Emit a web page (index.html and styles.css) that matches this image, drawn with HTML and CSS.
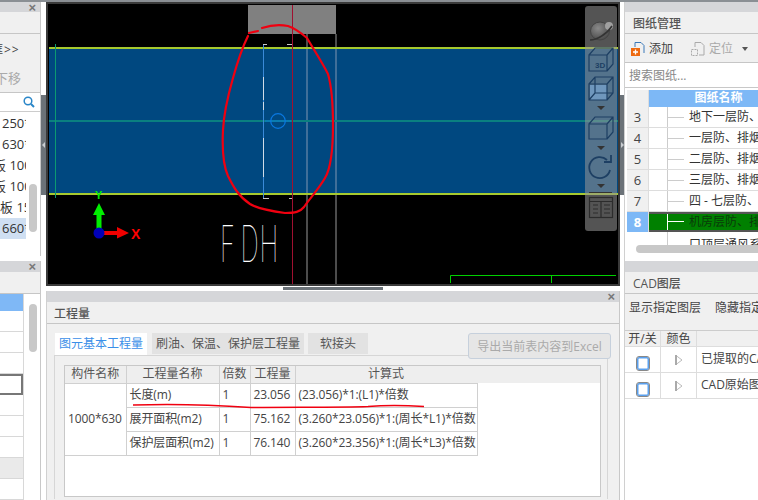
FILE: index.html
```html
<!DOCTYPE html>
<html lang="zh">
<head>
<meta charset="utf-8">
<title>工程量</title>
<link rel="stylesheet" href="styles.css">
</head>
<body>
<div class="app">
  <aside class="side side-left">
    <section class="panel panel-lt">
      <div class="strip"><span class="close">×</span></div>
      <div class="title-row"></div>
      <div class="tool-row tool-a"><span class="clip">框&gt;&gt;</span></div>
      <div class="tool-row tool-b"><span class="clip muted">下移</span></div>
      <div class="search-mini">
        <svg class="mag" width="12" height="12" viewBox="0 0 12 12"><circle cx="5" cy="5" r="3.8" fill="none" stroke="#2a86c8" stroke-width="1.5"/><path d="M8 8l3 3" stroke="#2a86c8" stroke-width="2"/></svg>
      </div>
      <div class="list-wrap">
        <ul class="list">
          <li>250*</li>
          <li>630*</li>
          <li class="cut-a">板 100</li>
          <li class="cut-a">板 100</li>
          <li class="cut-b">板 15</li>
          <li class="sel">660*</li>
        </ul>
        <div class="vbar"></div>
      </div>
    </section>
    <section class="panel panel-lb">
      <div class="strip"><span class="close">×</span></div>
      <div class="title-row"></div>
      <div class="list-wrap">
        <div class="rows">
          <div class="r r-blue"></div>
          <div class="r"></div>
          <div class="r"></div>
          <div class="r"></div>
          <div class="r r-focus"></div>
          <div class="r"></div>
          <div class="r"></div>
          <div class="r"></div>
          <div class="r r-grey"></div>
          <div class="r"></div>
        </div>
        <div class="vbar vbar-2"></div>
      </div>
    </section>
  </aside>

  <div class="split-v"><div class="grip"><span class="arrow-l"></span></div></div>

  <main class="center">
    <div class="canvas">
      <svg class="drawing" width="574" height="284" viewBox="46 2 574 284">
        <rect x="46" y="2" width="574" height="284" fill="#000"/>
        <rect x="47" y="3" width="572" height="282" fill="none" stroke="#3a3a3a" stroke-width="2"/>
        <rect x="248" y="5" width="88" height="29" fill="#808080"/>
        <rect x="49" y="48" width="569" height="146" fill="#004880"/>
        <path d="M307 34V284M336 34V284" stroke="#666" stroke-width="1.500" fill="none"/>
        <path d="M307 48V193M336 48V193" stroke="#3d76a8" stroke-width="1.500" fill="none"/>
        <rect x="49" y="47" width="569" height="2" fill="#a6c92e"/>
        <rect x="49" y="193" width="569" height="2" fill="#a6c92e"/>
        <rect x="49" y="120" width="569" height="2" fill="#0a8080"/>
        <path d="M55.500 44V198" stroke="#0c9a70" fill="none"/>
        <path d="M263.500 44V198" stroke="#3a8ad8" fill="none"/>
        <path d="M263.500 77V100M263.500 102V110M263.500 138V177" stroke="#d0dce8" fill="none"/>
        <path d="M263 44.500h4M287 44.500h5M263 198.500h6M289 198.500h3" stroke="#c8c8c8" fill="none"/>
        <circle cx="278" cy="121" r="7.300" fill="none" stroke="#0a78e0" stroke-width="1.200"/>
        <path d="M265 121H291" stroke="#0a78e0" fill="none"/>
        <path d="M292.500 5V284" stroke="#a01030" fill="none"/>
        <path d="M450.500 283V275.500H616M551.500 275.500V283" stroke="#00d000" fill="none"/>
        <text class="cad-text" transform="translate(220 262) scale(.5 1)"><tspan>F</tspan><tspan dx="11">D</tspan><tspan dx="2">H</tspan></text>
        <path d="M96.500 232V215H93L99 203L105 215H101.500V232Z" fill="#00ee00"/>
        <path d="M104 231H117V227L129 233L117 238.500V235H104Z" fill="#f00000"/>
        <circle cx="99" cy="233" r="5.500" fill="#0000b8"/>
        <text class="axis axis-x" x="131" y="239">X</text>
        <text class="axis axis-y" x="95" y="199">Y</text>
        <path d="M248 36C243 46 238 60 233 78C229 92 224 110 223 130C222 150 223 165 228 176C233 186 238 196 250 204C258 209 270 211 285 213C295 213 300 212 304 207C310 198 318 190 325 178C331 168 333 150 333 125C333 105 332 88 328 74C322 62 314 50 307 38C300 32 294 28 288 26C278 24 268 26 262 28M258 31L249 33" fill="none" stroke="#f00010" stroke-width="2.200" stroke-linecap="round"/>
      </svg>
      <div class="view-tools">
        <svg width="32" height="225" viewBox="0 0 32 225">
          <defs>
            <radialGradient id="ball" cx=".4" cy=".35" r=".8"><stop offset="0" stop-color="#8a8a8a"/><stop offset="1" stop-color="#3f3f3f"/></radialGradient>
          </defs>
          <ellipse cx="15" cy="25" rx="9.500" ry="9" fill="url(#ball)" stroke="#444"/>
          <circle cx="24" cy="20" r="4" fill="#a0a0a0"/>
          <path d="M5 34C12 34 22 28 27 20" fill="none" stroke="#333" stroke-width="1.500"/>
          <rect x="5" y="79" width="17" height="15" fill="#7ba7d2" opacity=".7"/>
          <g fill="none" stroke="#1d3f63" stroke-width="1.200">
            <path d="M4 49h18v16H4zM4 49l6-7h18v16l-6 7M22 49l6-7"/>
            <path d="M4 78h18v16H4zM4 78l6-7h18v16l-6 7M22 78l6-7M10 71v16h18M10 87l-6 7"/>
            <path d="M4 118h18v15H4zM4 118l6-7h18v15l-6 7M22 118l6-7"/>
            <path d="M25 164A10.500 10.500 0 1 1 22 154M26 149v7h-7" stroke-width="1.800"/>
          </g>
          <text class="tool-3d" x="10" y="62">3D</text>
          <path d="M12 100h8l-4 4zM12 140h8l-4 4zM12 178h8l-4 4z" fill="#333"/>
          <path d="M4 186.500h23" stroke="#333" fill="none"/>
          <g fill="none" stroke="#2c2c2c" stroke-width="1.200">
            <rect x="4.500" y="191.500" width="23" height="20"/>
            <path d="M4 195.500h24M16 196v15M8 199h5M19 199h6M8 203h5M19 203h6M8 207h5M19 207h6"/>
          </g>
        </svg>
      </div>
    </div>

    <div class="split-h"><div class="grip-h"></div></div>

    <section class="panel panel-qty">
      <div class="strip"><span class="close">×</span></div>
      <div class="title-row title-text">工程量</div>
      <div class="qty-body">
        <div class="tabbar">
          <span class="tab tab-on">图元基本工程量</span>
          <span class="tab tab-2">刷油、保温、保护层工程量</span>
          <span class="tab tab-3">软接头</span>
          <span class="export">导出当前表内容到Excel</span>
        </div>
        <div class="tabpane">
          <div class="grid-box">
            <table class="qty">
              <colgroup><col class="c1"><col class="c2"><col class="c3"><col class="c4"><col class="c5"></colgroup>
              <thead>
                <tr><th>构件名称</th><th>工程量名称</th><th>倍数</th><th>工程量</th><th>计算式</th></tr>
              </thead>
              <tbody>
                <tr><td rowspan="3" class="ctr">1000*630</td><td>长度(m)</td><td>1</td><td>23.056</td><td>(23.056)*1:(L1)*倍数</td></tr>
                <tr><td>展开面积(m2)</td><td>1</td><td>75.162</td><td>(3.260*23.056)*1:(周长*L1)*倍数</td></tr>
                <tr><td>保护层面积(m2)</td><td>1</td><td>76.140</td><td>(3.260*23.356)*1:(周长*L3)*倍数</td></tr>
              </tbody>
            </table>
          </div>
        </div>
      </div>
      <svg class="underline" width="300" height="8" viewBox="130 402 300 8"><path d="M132 405C160 404 200 404 250 407.500C290 407 340 407.500 367 406.500C385 405 400 405 423 406.500" fill="none" stroke="#f00010" stroke-width="1.500"/></svg>
    </section>
  </main>

  <div class="split-v split-r"><div class="grip"><span class="arrow-r"></span></div></div>

  <aside class="side side-right">
    <section class="panel panel-rt">
      <div class="strip"></div>
      <div class="title-row title-text">图纸管理</div>
      <div class="tool-row draw-tools">
        <svg width="15" height="16" viewBox="0 0 15 16"><path d="M5 1.500h6l3 3V12" fill="none" stroke="#3a78b8"/><path d="M5 1.500V6" stroke="#3a78b8" fill="none"/><rect x="1" y="7" width="9" height="8" fill="#ee6a10"/><path d="M5.500 8.500v5M3 11h5" stroke="#fff" stroke-width="1.300"/></svg>
        <span class="dt-on">添加</span>
        <svg class="dt-gap" width="15" height="16" viewBox="0 0 15 16"><path d="M5 1.500h6l3 3V14H9M5 1.500V6" fill="none" stroke="#aaa"/><rect x="1.500" y="8.500" width="6" height="6" fill="none" stroke="#aaa" stroke-dasharray="2 1"/></svg>
        <span class="dt-off">定位</span>
        <span class="caret"></span>
        <svg class="dt-last" width="15" height="16" viewBox="0 0 15 16"><path d="M1.500 2v12" stroke="#aaa" stroke-width="1.500" fill="none"/></svg>
      </div>
      <div class="search-box">搜索图纸...</div>
      <div class="draw-table">
        <div class="dt-row dt-head"><span class="num"></span><span class="dt-title">图纸名称</span></div>
        <div class="dt-row"><span class="num">3</span><span class="tree"></span><span class="name">地下一层防、排烟</span></div>
        <div class="dt-row"><span class="num">4</span><span class="tree"></span><span class="name">一层防、排烟系统</span></div>
        <div class="dt-row"><span class="num">5</span><span class="tree"></span><span class="name">二层防、排烟系统</span></div>
        <div class="dt-row"><span class="num">6</span><span class="tree"></span><span class="name">三层防、排烟系统</span></div>
        <div class="dt-row"><span class="num">7</span><span class="tree"></span><span class="name">四 - 七层防、排烟</span></div>
        <div class="dt-row dt-green"><span class="num">8</span><span class="tree"></span><span class="name">机房层防、排烟系统</span></div>
        <div class="dt-row dt-cut"><span class="num"></span><span class="tree"></span><span class="name">口顶层通风系统</span></div>
        <div class="hbar"></div>
      </div>
    </section>
    <section class="panel panel-rb">
      <div class="strip"></div>
      <div class="title-row title-text">CAD图层</div>
      <div class="cad-tools"><span>显示指定图层</span><span>隐藏指定图层</span></div>
      <div class="cad-table">
        <div class="cad-row cad-head"><span class="k1">开/关</span><span class="k2">颜色</span><span class="k3"></span></div>
        <div class="cad-row"><span class="k1"><i class="check"></i></span><span class="k2"><svg class="tri" width="8" height="10" viewBox="0 0 8 10"><path d="M1 .500L7 5L1 9.500Z" fill="#fff" stroke="#bbb"/><path d="M1 0V10" stroke="#aaa" stroke-width="2"/></svg></span><span class="k3">已提取的CAD图层</span></div>
        <div class="cad-row"><span class="k1"><i class="check"></i></span><span class="k2"><svg class="tri" width="8" height="10" viewBox="0 0 8 10"><path d="M1 .500L7 5L1 9.500Z" fill="#fff" stroke="#bbb"/><path d="M1 0V10" stroke="#aaa" stroke-width="2"/></svg></span><span class="k3">CAD原始图层</span></div>
      </div>
    </section>
  </aside>
</div>
</body>
</html>
```

FILE: styles.css
```css
* { box-sizing: border-box; }
html, body { margin: 0; padding: 0; }
body {
  width: 758px; height: 500px; overflow: hidden; background: #fff;
  font: 12px/1 "Open Sans", "Noto Sans CJK SC", sans-serif; color: #444;
}
ul { margin: 0; padding: 0; list-style: none; }
.app { display: grid; grid-template-columns: 41px 5px 574px 4px 134px; height: 500px; border-top: 2px solid #8a8f94; }

/* shared panel chrome */
.side { display: flex; flex-direction: column; gap: 5px; overflow: hidden; }
.panel { display: flex; flex-direction: column; background: #f0f0f0; overflow: hidden; position: relative; border-right: 1px solid #c8c8c8; }
.strip { height: 11px; flex: none; background: #d5d6d9; position: relative; }
.close { position: absolute; right: 4px; top: 0; font: 700 13px/11px "Liberation Sans", sans-serif; color: #777; }
.title-row { height: 22px; flex: none; background: #f0f0f0; border-bottom: 1px solid #c6c6c6; }
.title-text { padding: 6px 0 0 8px; font-size: 12px; color: #555; font-weight: 500; }
.tool-row { flex: none; background: #f0f0f0; }

/* left column */
.panel-lt { height: 254px; flex: none; }
.panel-lt .strip { height: 10px; }
.tool-a { height: 30px; padding-top: 10px; }
.tool-b { height: 29px; padding-top: 8px; border-bottom: 1px solid #c6c6c6; }
.clip { display: block; margin-left: -9px; font-size: 12px; letter-spacing: 1px; color: #444; white-space: nowrap; }
.tool-b .clip { font-size: 13px; margin-left: -5px; letter-spacing: 0; }
.muted { color: #aaa !important; }
.search-mini { height: 19px; flex: none; background: #fff; border-bottom: 1px solid #ccc; display: flex; justify-content: flex-end; padding: 3px 5px 0 0; }
.list-wrap { flex: 1; background: #fff; position: relative; display: flex; }
.list { width: 26px; overflow: hidden; padding-top: 1px; }
.list li { height: 21px; padding: 4px 0 0 2px; white-space: nowrap; overflow: hidden; color: #333; font-size: 13px; }
.list .cut-a { text-indent: -9px; }
.list .cut-b { text-indent: -2px; }
.list .sel { background: #cfdff2; }
.vbar { position: absolute; right: 3px; top: 72px; width: 8px; height: 48px; border-radius: 4px; background: #c8c8c8; }
.panel-lb { flex: 1; }
.panel-lb .list-wrap { margin-bottom: 3px; }
.rows { width: 24px; border-right: 1px solid #d8d8d8; }
.r { height: 21px; border-bottom: 1px solid #d8d8d8; background: #fff; }
.r-blue { height: 17px; background: #7fb8f6; border-bottom: 0; }
.r-focus { border: 2px solid #777; margin-left: -2px; }
.r-grey { background: #eaeaea; }
.vbar-2 { top: 10px; }

/* splitters */
.split-v { position: relative; background: #fff; }
.grip { position: absolute; left: 0; right: 0; top: 93px; height: 100px; background: #6b7278; display: flex; align-items: center; justify-content: center; }
.arrow-l { border: 3px solid transparent; border-right: 3px solid #c8ccd0; border-left: 0; height: 0; }
.arrow-r { border: 3px solid transparent; border-left: 3px solid #c8ccd0; border-right: 0; height: 0; }

/* centre */
.center { display: flex; flex-direction: column; overflow: hidden; }
.canvas { height: 284px; flex: none; position: relative; background: #000; }
.drawing { display: block; }
.cad-text { font: 100 51px "Inter", "Liberation Sans", sans-serif; fill: #fff; }
.axis { font: 700 13px "Liberation Sans", sans-serif; }
.axis-x { fill: #f00; font-size: 14px; }
.axis-y { fill: #0e0; font-size: 11px; }
.view-tools { position: absolute; left: 539px; top: 4px; width: 32px; height: 225px; border-radius: 3px; background: rgba(150,150,150,.56); }
.view-tools svg { display: block; }
.tool-3d { font: 700 8px "Liberation Sans", sans-serif; fill: #1d3f63; }
.split-h { height: 5px; flex: none; position: relative; background: #fff; }
.grip-h { position: absolute; left: 237px; top: 1px; width: 100px; height: 3px; background: #6b7278; }
.panel-qty { flex: 1; border-left: 1px solid #d0d0d0; }
.panel-qty .title-text { padding-left: 7px; }
.qty-body { flex: 1; padding: 9px 0 0 8px; background: #f0f0f0; }
.tabbar { display: flex; height: 22px; align-items: flex-start; position: relative; }
.tab { height: 21px; padding-top: 5px; background: #e2e2e2; color: #555; margin-right: 4px; text-align: center; white-space: nowrap; }
.tab-on { width: 92px; height: 22px; background: #fff; color: #3b8fe8; margin-right: 5px; position: relative; z-index: 1; }
.tab-2 { width: 152px; }
.tab-3 { width: 60px; }
.export { position: absolute; left: 413px; top: 0; width: 143px; height: 26px; border: 1px solid #c6d0dc; border-radius: 3px; background: #e6e6e6; color: #aaa; text-align: center; padding-top: 7px; white-space: nowrap; }
.tabpane { height: 144px; margin: 0 11px 0 -1px; border: 1px solid #d6d6d6; border-bottom: 0; padding: 9px 0 0 9px; background: #f0f0f0; }
.grid-box { width: 537px; height: 132px; border: 1px solid #c8c8c8; background: #fff; position: relative; }
.grid-box::before { content: ""; position: absolute; left: 412px; right: 0; top: 0; height: 17px; background: #eee; }
.qty { border-collapse: collapse; table-layout: fixed; width: 412px; background: #fff; }
.c1 { width: 61px; } .c2 { width: 93px; } .c3 { width: 31px; } .c4 { width: 45px; } .c5 { width: 182px; }
.qty th { height: 17px; padding: 0; background: #eee; border-right: 1px solid #d0d0d0; border-bottom: 1px solid #d0d0d0; font-weight: 400; color: #555; }
.qty td { height: 24px; padding: 0 0 0 3px; border-right: 1px solid #d0d0d0; border-bottom: 1px solid #d0d0d0; white-space: nowrap; overflow: hidden; color: #444; letter-spacing: -.1px; }
.underline { position: absolute; left: 84px; top: 111px; }

/* right column */
.side-right { border-left: 1px solid #d0d0d0; }
.panel-rt { height: 254px; flex: none; border-right: 0; }
.panel-rt .strip { height: 10px; }
.panel-rb { flex: 1; border-right: 0; }
.draw-tools { height: 29px; display: flex; align-items: center; padding: 2px 0 0 5px; border-bottom: 1px solid #c6c6c6; gap: 4px; overflow: hidden; white-space: nowrap; }
.draw-tools svg, .draw-tools span { flex: none; }
.dt-off { color: #aaa; }
.dt-gap { margin-left: 13px; }
.caret { width: 0; height: 0; border: 3px solid transparent; border-top: 4px solid #555; border-bottom: 0; margin-left: 5px; }
.dt-last { margin-left: 6px; }
.search-box { height: 25px; flex: none; background: #fff; border-bottom: 1px solid #c8c8c8; padding: 7px 0 0 4px; color: #888; }
.draw-table { flex: 1; background: #fff; padding: 2px 0 0 2px; position: relative; overflow: hidden; }
.dt-row { display: flex; height: 21px; white-space: nowrap; border-bottom: 1px solid #ddd; }
.num { width: 22px; flex: none; background: #f0f0f0; border-right: 1px solid #ddd; text-align: center; padding-top: 4px; color: #444; font-size: 13px; }
.tree { width: 19px; flex: none; border-right: 1px solid #ccc; position: relative; }
.tree::after { content: ""; position: absolute; left: 19px; top: 10px; width: 16px; height: 1px; background: #ccc; }
.name { padding: 4px 0 0 21px; color: #333; }
.dt-head { height: 17px; border-bottom: 0; }
.dt-title { flex: 1; background: #7db8f6; color: #fff; text-align: center; padding: 2px 0 0 30px; font-weight: 700; }
.dt-green { height: 20px; border-top: 2px solid #555; border-bottom: 2px solid #555; background: #008000; }
.dt-green .num { background: #7db8f6; color: #fff; font-weight: 700; margin-top: -2px; height: 20px; }
.dt-green .tree { border-right-color: #fff; }
.dt-green .tree::after { background: #fff; top: 7px; }
.dt-green .name { color: #0a3a0a; padding-top: 2px; }
.dt-cut { height: 13px; border-bottom: 0; overflow: hidden; }
.dt-cut .num { background: #fff; border-right: 0; }
.dt-cut .tree::after { display: none; }
.dt-cut .name { padding-top: 7px; }
.hbar { position: absolute; left: 11px; bottom: 3px; right: 0; height: 8px; background: #c8c8c8; border-radius: 4px 0 0 4px; }
.cad-tools { height: 36px; flex: none; padding: 8px 0 0 4px; display: flex; gap: 14px; white-space: nowrap; color: #444; }
.cad-table { flex: 1; background: #fff; }
.cad-row { display: flex; height: 26px; border-bottom: 1px solid #ddd; white-space: nowrap; }
.cad-head { height: 17px; background: #f0f0f0; border-top: 1px solid #ccc; }
.k1, .k2 { flex: none; width: 36px; border-right: 1px solid #ddd; display: flex; align-items: center; justify-content: center; }
.k3 { padding: 6px 0 0 4px; color: #444; }
.check { width: 14px; height: 15px; margin-top: 7px; border: 1px solid #888; border-radius: 3px; background: #fff; box-shadow: inset 0 0 0 1.500px #5aa0ee; }
.tri { display: block; }
```
